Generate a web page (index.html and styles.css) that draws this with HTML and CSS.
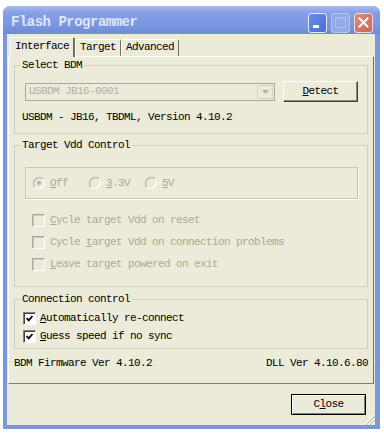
FILE: index.html
```html
<!DOCTYPE html>
<html lang="en">
<head>
    <meta charset="UTF-8">
    <meta name="viewport" content="width=device-width, initial-scale=1.0">
    <title>Flash Programmer</title>
    <link rel="stylesheet" href="styles.css">
</head>
<body>
    <div class="window">
        <div class="titlebar">
            <span class="title">Flash Programmer</span>
            <div class="caption-buttons">
                <span class="cap-btn cap-min"><span class="dash"></span></span>
                <span class="cap-btn cap-max"><span class="box"></span></span>
                <span class="cap-btn cap-close">
                    <svg width="11" height="11" viewBox="0 0 11 11"><path d="M1.5 1.5 L9.5 9.5 M9.5 1.5 L1.5 9.5" stroke="#fff" stroke-width="2" stroke-linecap="square"/></svg>
                </span>
            </div>
        </div>

        <div class="client">
            <div class="tabs">
                <div class="tab selected">Interface</div>
                <div class="tab">Target</div>
                <div class="tab">Advanced</div>
            </div>

            <div class="panel">
                <fieldset class="group group-bdm">
                    <legend>Select BDM</legend>
                    <div class="bdm-row">
                        <div class="combo">
                            <span class="combo-text">USBDM JB16-0001</span>
                            <span class="combo-arrow">
                                <svg width="7" height="4" viewBox="0 0 7 4"><path d="M0 0 H7 L3.5 4 Z" fill="#b3b1a6"/></svg>
                            </span>
                        </div>
                        <div class="btn btn-detect"><u>D</u>etect</div>
                    </div>
                    <div class="bdm-info">USBDM - JB16, TBDML, Version 4.10.2</div>
                </fieldset>

                <fieldset class="group group-vdd">
                    <legend>Target Vdd Control</legend>
                    <div class="radio-box">
                        <div class="radio-item">
                            <svg class="radio" width="12" height="12" viewBox="0 0 12 12">
                                <path d="M10.2 1.8 A6 6 0 0 0 1.8 10.2" fill="none" stroke="#b8b6aa" stroke-width="1.4"/>
                                <path d="M1.8 10.2 A6 6 0 0 0 10.2 1.8" fill="none" stroke="#fff" stroke-width="1.4"/>
                                <circle cx="6" cy="6" r="2" fill="#b3b1a6"/>
                            </svg>
                            <span class="off"><u>O</u>ff</span>
                        </div>
                        <div class="radio-item">
                            <svg class="radio" width="12" height="12" viewBox="0 0 12 12">
                                <path d="M10.2 1.8 A6 6 0 0 0 1.8 10.2" fill="none" stroke="#b8b6aa" stroke-width="1.4"/>
                                <path d="M1.8 10.2 A6 6 0 0 0 10.2 1.8" fill="none" stroke="#fff" stroke-width="1.4"/>
                            </svg>
                            <span class="off"><u>3</u>.3V</span>
                        </div>
                        <div class="radio-item">
                            <svg class="radio" width="12" height="12" viewBox="0 0 12 12">
                                <path d="M10.2 1.8 A6 6 0 0 0 1.8 10.2" fill="none" stroke="#b8b6aa" stroke-width="1.4"/>
                                <path d="M1.8 10.2 A6 6 0 0 0 10.2 1.8" fill="none" stroke="#fff" stroke-width="1.4"/>
                            </svg>
                            <span class="off"><u>5</u>V</span>
                        </div>
                    </div>
                    <div class="vdd-options">
                        <div class="check-row"><span class="check disabled"></span><span class="off"><u>C</u>ycle target Vdd on reset</span></div>
                        <div class="check-row"><span class="check disabled"></span><span class="off">Cycle <u>t</u>arget Vdd on connection problems</span></div>
                        <div class="check-row"><span class="check disabled"></span><span class="off"><u>L</u>eave target powered on exit</span></div>
                    </div>
                </fieldset>

                <fieldset class="group group-conn">
                    <legend>Connection control</legend>
                    <div class="conn-row">
                        <span class="check">
                            <svg width="7" height="7" viewBox="0 0 7 7"><path d="M0.5 3 L2.7 5.3 L6.5 1" fill="none" stroke="#000" stroke-width="1.8"/></svg>
                        </span>
                        <span><u>A</u>utomatically re-connect</span>
                    </div>
                    <div class="conn-row">
                        <span class="check">
                            <svg width="7" height="7" viewBox="0 0 7 7"><path d="M0.5 3 L2.7 5.3 L6.5 1" fill="none" stroke="#000" stroke-width="1.8"/></svg>
                        </span>
                        <span><u>G</u>uess speed if no sync</span>
                    </div>
                </fieldset>

                <div class="versions">
                    <span>BDM Firmware Ver 4.10.2</span>
                    <span>DLL Ver 4.10.6.80</span>
                </div>
            </div>

            <div class="footer">
                <div class="btn btn-close">C<u>l</u>ose</div>
            </div>

            <svg class="grip" width="12" height="12" viewBox="0 0 12 12">
                <path d="M11 2 L2 11 M11 6 L6 11 M11 10 L10 11" stroke="#fff" stroke-width="1"/>
                <path d="M12 3 L3 12 M12 7 L7 12" stroke="#b9b6a6" stroke-width="1"/>
            </svg>
        </div>
    </div>
</body>
</html>
```

FILE: styles.css
```css
body {
    margin: 0;
    background-color: #fff;
    font-family: "Liberation Mono", monospace;
    font-size: 11px;
    letter-spacing: -0.6px;
    line-height: 13px;
    color: #000;
}

.window {
    margin: 6px 0 0 3px;
    width: 377px;
    height: 423px;
    display: flex;
    flex-direction: column;
    background-color: #7b96dc;
    border-radius: 7px 7px 0 0;
}

.titlebar {
    height: 28px;
    box-sizing: border-box;
    padding: 5px 7px 0 8px;
    display: flex;
    align-items: center;
    justify-content: space-between;
    background: linear-gradient(#a8bcf0 0%, #859fe4 25%, #7b96e0 70%, #6f8bd8 100%);
    border-radius: 7px 7px 0 0;
}

.title {
    font-size: 14px;
    font-weight: bold;
    letter-spacing: -0.5px;
    color: #dfe7f8;
}

.caption-buttons {
    display: flex;
    gap: 4px;
}

.cap-btn {
    position: relative;
    width: 19px;
    height: 20px;
    box-sizing: border-box;
    border: 1px solid #e4ebfa;
    border-radius: 3px;
    display: flex;
    align-items: center;
    justify-content: center;
}

.cap-min {
    background: linear-gradient(135deg, #6c8ee6, #4a6bd3);
}

.cap-min .dash {
    position: absolute;
    left: 4px;
    bottom: 4px;
    width: 6px;
    height: 3px;
    background-color: #fff;
}

.cap-max {
    background-color: #93a9e8;
    border-color: #b7c6f1;
}

.cap-max .box {
    width: 9px;
    height: 8px;
    border: 1px solid #a9bbee;
    border-top-width: 2px;
}

.cap-close {
    background: linear-gradient(135deg, #e0897c, #c9675c);
    border-color: #f2d8d2;
}

.client {
    position: relative;
    flex: 1;
    margin: 0 5px 4px 4px;
    background-color: #ecead9;
    display: flex;
    flex-direction: column;
}

.tabs {
    height: 22px;
    padding-left: 3px;
    display: flex;
    align-items: flex-end;
}

.tab {
    height: 17px;
    box-sizing: border-box;
    padding: 1px 4px 0 4px;
    border-left: 1px solid #fff;
    border-top: 1px solid #fff;
    border-right: 1px solid #716f64;
    border-radius: 2px 2px 0 0;
}

.tab.selected {
    height: 20px;
    padding-top: 2px;
    margin-bottom: -1px;
    background-color: #ecead9;
    position: relative;
    z-index: 1;
    border-right-width: 2px;
}

.panel {
    height: 328px;
    box-sizing: border-box;
    margin: 0 1px;
    padding: 2px 5px 0 5px;
    border: 1px solid;
    border-color: #fff #716f64 #808078 #fff;
    display: flex;
    flex-direction: column;
}

.group {
    margin: 0;
    padding: 0 7px;
    border: 1px solid #d2cfbe;
    min-width: 0;
}

.group legend {
    padding: 0 2px;
    margin-left: -2px;
    line-height: 13px;
}

.group-bdm {
    padding-top: 9px;
    padding-bottom: 9px;
}

.bdm-row {
    display: flex;
    align-items: center;
    height: 21px;
}

.combo {
    margin-left: 3px;
    width: 250px;
    height: 18px;
    box-sizing: border-box;
    border: 1px solid #a9a89e;
    display: flex;
    align-items: center;
    justify-content: space-between;
    padding: 0 1px 0 3px;
}

.combo-text {
    color: #b3b1a6;
}

.combo-arrow {
    width: 16px;
    height: 14px;
    box-sizing: border-box;
    border: 1px solid #d6d4c8;
    display: flex;
    align-items: center;
    justify-content: center;
}

.btn {
    height: 21px;
    width: 75px;
    box-sizing: border-box;
    display: flex;
    align-items: center;
    justify-content: center;
    border: 1px solid;
    border-color: #fff #404040 #404040 #fff;
    box-shadow: inset -1px -1px #8a887e;
}

.btn-detect {
    margin-left: 8px;
}

.bdm-info {
    margin-top: 9px;
    margin-left: 0;
}

.group-vdd {
    margin-top: 5px;
    padding-top: 15px;
    padding-bottom: 11px;
}

.off {
    color: #aca899;
}

.radio-box {
    height: 32px;
    box-sizing: border-box;
    margin: 0 2px 0 3px;
    border: 1px solid #c9c6b5;
    box-shadow: 1px 1px #fff;
    padding-left: 7px;
    display: flex;
    align-items: center;
}

.radio-item {
    width: 56px;
    display: flex;
    align-items: center;
    gap: 5px;
}

.vdd-options {
    margin-top: 10px;
}

.check-row {
    height: 22px;
    padding-left: 10px;
    display: flex;
    align-items: center;
    gap: 5px;
}

.check {
    width: 13px;
    height: 13px;
    box-sizing: border-box;
    flex: none;
    border: 1px solid;
    border-color: #808080 #fff #fff #808080;
    box-shadow: inset 1px 1px #404040;
    background-color: #fff;
    display: flex;
    align-items: center;
    justify-content: center;
}

.check.disabled {
    background-color: #ecead9;
    border-color: #aaa89c #fff #fff #aaa89c;
    box-shadow: inset 1px 1px #cfccbc;
}

.group-conn {
    margin-top: 6px;
    padding-top: 3px;
    padding-bottom: 3px;
}

.conn-row {
    height: 18px;
    padding-left: 1px;
    display: flex;
    align-items: center;
    gap: 4px;
}

.versions {
    margin-top: 8px;
    display: flex;
    justify-content: space-between;
    padding-right: 0;
}

.footer {
    display: flex;
    justify-content: flex-end;
    padding: 10px 9px 0 0;
}

.btn-close {
    border-color: #000;
    box-shadow: inset 1px 1px #fff, inset -1px -1px #808080;
}

.grip {
    position: absolute;
    right: 0;
    bottom: 0;
}
```
